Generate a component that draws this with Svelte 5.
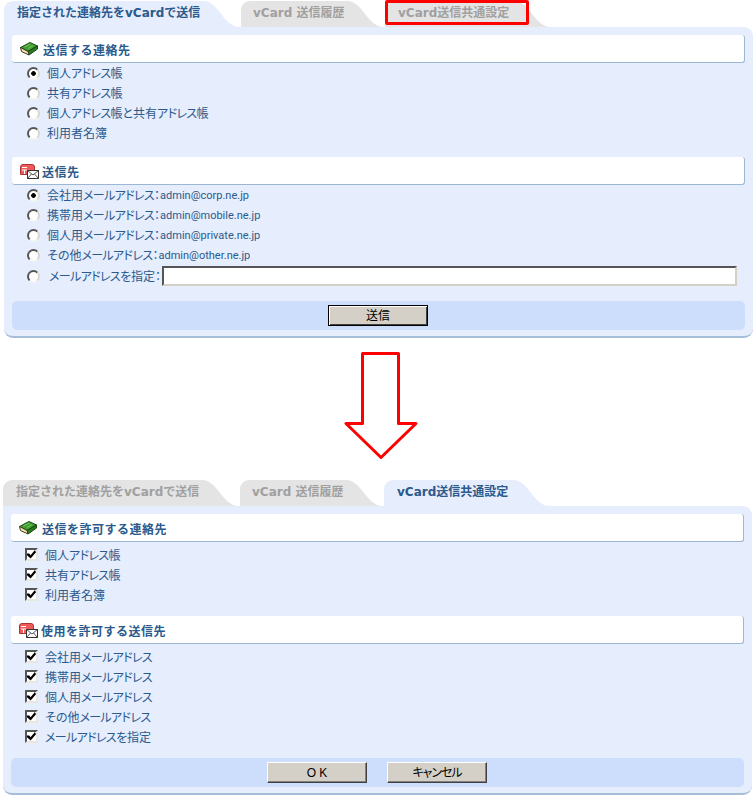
<script>
  const sendTabs = ['指定された連絡先をvCardで送信', 'vCard 送信履歴', 'vCard送信共通設定'];
  const contacts = ['個人アドレス帳', '共有アドレス帳', '個人アドレス帳と共有アドレス帳', '利用者名簿'];
  const targets = [
    ['会社用メールアドレス', 'admin@corp.ne.jp'],
    ['携帯用メールアドレス', 'admin@mobile.ne.jp'],
    ['個人用メールアドレス', 'admin@private.ne.jp'],
    ['その他メールアドレス', 'admin@other.ne.jp']
  ];
  const allowContacts = ['個人アドレス帳', '共有アドレス帳', '利用者名簿'];
  const allowTargets = ['会社用メールアドレス', '携帯用メールアドレス', '個人用メールアドレス', 'その他メールアドレス', 'メールアドレスを指定'];
  const parts = (s) => s.match(/[ァ-ヶー]+|[^ァ-ヶー]+/g);
  const isKana = (s) => /^[ァ-ヶー]/.test(s);
</script>

{#snippet book()}
  <svg class="icon" width="18" height="14" viewBox="0 0 18 14" aria-hidden="true">
    <polygon points="0.5,5.5 10,0.5 17.5,4 8,9.5" fill="#3f9d2e" stroke="#17490f"/>
    <polygon points="8,9.5 17.5,4 17.5,7 9,13" fill="#2c7a1f" stroke="#17490f"/>
    <polygon points="0.5,5.5 8,9.5 9,13 1.5,9.5" fill="#f2e8b4" stroke="#3d3a24"/>
    <path d="M4.5 5 L10.5 2 M8 6.5 L13 3.5" stroke="#7cc864" fill="none"/>
  </svg>
{/snippet}

{#snippet mail()}
  <svg class="icon mail" width="19" height="15" viewBox="0 0 19 15" aria-hidden="true">
    <path d="M0.5 10.5 V3 Q0.5 0.5 3 0.5 H12 Q14.5 0.5 14.5 3 V10.5 Z" fill="#f25a5a" stroke="#a83434"/>
    <path d="M2 3.5 H7 M2 6 H7 M4.5 6 V10" stroke="#fff" fill="none"/>
    <rect x="7.5" y="6.5" width="11" height="8" fill="#fff" stroke="#333"/>
    <path d="M7.5 6.5 L13 11 L18.5 6.5 M7.5 14.5 L11.5 10 M18.5 14.5 L14.5 10" stroke="#555" fill="none"/>
  </svg>
{/snippet}

{#snippet text(s)}
  <span class="label">{#each parts(s) as p}<span class:kana={isKana(p)}>{p}</span>{/each}</span>
{/snippet}

{#snippet tabs(active, outlined)}
  <div class="tabs">
    {#each sendTabs as label, i}
      <div class="tab t{i}" class:on={active === i}>
        <div class="tab-body">{label}</div>
        <svg class="curve" width="40" height="26" viewBox="0 0 40 26" aria-hidden="true">
          <path d="M0 0 H3 C19 0 23 26 40 26 H0 Z"/>
        </svg>
        {#if outlined === i}<div class="mark"></div>{/if}
      </div>
    {/each}
  </div>
{/snippet}

<main class="page">
  <section class="panel first">
    {@render tabs(0, 2)}
    <div class="body">
      <h2 class="head">{@render book()}<span>送信する連絡先</span></h2>
      <div class="group">
        {#each contacts as c, i}
          <label class="row"><input type="radio" name="who" checked={i === 0} />{@render text(c)}</label>
        {/each}
      </div>
      <h2 class="head">{@render mail()}<span>送信先</span></h2>
      <div class="group last">
        {#each targets as t, i}
          <label class="row"><input type="radio" name="to" checked={i === 0} />{@render text(t[0] + '：')}<span class="addr">{t[1]}</span></label>
        {/each}
        <label class="row tall"><input type="radio" name="to" /><span class="custom">{@render text('メールアドレスを指定：')}</span><input class="text" type="text" /></label>
      </div>
      <div class="foot"><button class="btn default">送信</button></div>
    </div>
  </section>

  <svg class="arrow" width="80" height="112" viewBox="0 0 80 112" aria-hidden="true">
    <path d="M18.5 1.5 H54.5 V71.5 H72 L37 105.5 L2 71.5 H18.5 Z" fill="#fff" stroke="#f00" stroke-width="3" stroke-linejoin="round"/>
  </svg>

  <section class="panel second">
    {@render tabs(2, -1)}
    <div class="body">
      <h2 class="head">{@render book()}<span>送信を許可する連絡先</span></h2>
      <div class="group">
        {#each allowContacts as c}
          <label class="row"><input type="checkbox" checked />{@render text(c)}</label>
        {/each}
      </div>
      <h2 class="head">{@render mail()}<span>使用を許可する送信先</span></h2>
      <div class="group last">
        {#each allowTargets as c}
          <label class="row"><input type="checkbox" checked />{@render text(c)}</label>
        {/each}
      </div>
      <div class="foot"><button class="btn">O K</button><button class="btn cancel">キャンセル</button></div>
    </div>
  </section>
</main>

<style>
  :global(body) { margin: 0; background: #fff; }
  .page {
    width: 756px;
    height: 800px;
    overflow: hidden;
    padding-top: 1px;
    box-sizing: border-box;
    font: 12px/16px "Liberation Sans", "Noto Sans CJK JP", sans-serif;
    font-feature-settings: "palt";
    color: #2b5a8c;
  }
  .panel { width: 749px; }
  .first { margin-left: 4px; }
  .second { margin-left: 3px; }
  .tabs { display: flex; gap: 1px; height: 26px; }
  .tab { display: flex; position: relative; color: #a0a0a0; font-weight: bold; fill: #e4e4e4; }
  .tab-body {
    background: #e4e4e4;
    border-top-left-radius: 9px;
    padding-left: 13px;
    line-height: 24px;
    white-space: nowrap;
    font-family: "DejaVu Sans", "Noto Sans CJK JP", sans-serif;
    font-feature-settings: normal;
  }
  .t0 .tab-body { width: 183px; }
  .t1 .tab-body { width: 91px; padding-left: 12px; }
  .t2 .tab-body { width: 113px; }
  .tab.on { color: #2b5a8c; fill: #e6edfd; }
  .tab.on .tab-body { background: #e6edfd; }
  .curve { display: block; }
  .mark {
    position: absolute;
    left: 0;
    top: -1px;
    width: 144px;
    height: 25px;
    box-sizing: border-box;
    border: 3px solid #f00;
    border-radius: 2px;
  }
  .body {
    background: #e6edfd;
    border-bottom: 2px solid #a6bdd8;
    border-radius: 0 9px 9px 9px;
    padding: 8px 8px 6px;
  }
  .head {
    display: flex;
    align-items: center;
    height: 27px;
    margin: 0;
    padding-left: 8px;
    background: #fff;
    border: solid #9db6d1;
    border-width: 0 1px 1px 0;
    border-radius: 3px;
    font-size: 12px;
    font-weight: bold;
    color: #2b5a8c;
    font-feature-settings: normal;
    letter-spacing: 0.5px;
  }
  .head span { margin-top: 4px; }
  .icon { margin-right: 5px; flex: none; }
  .icon.mail { margin: 2px 3px 0 0; }
  .group { padding-bottom: 14px; }
  .second .group { padding: 3px 0 11px; }
  .row { display: flex; align-items: center; height: 20px; padding-left: 15px; }
  .second .row { padding-left: 14px; }
  .row.tall { height: 22px; padding-right: 8px; }
  .label { margin-top: 1px; white-space: nowrap; }
  .second .label { margin-top: 2px; }
  .kana { letter-spacing: -0.65px; }
  .row input[type='radio'], .row input[type='checkbox'] {
    appearance: none;
    flex: none;
    position: relative;
    box-sizing: border-box;
    width: 13px;
    height: 13px;
    margin: 0 7px 0 0;
    background: #fff;
  }
  .row input[type='radio'] {
    border-radius: 50%;
    border: 2px solid;
    border-color: #555 #d8d8d0 #f4f4f0 #555;
  }
  .row input[type='radio']:checked {
    background: radial-gradient(circle, #000 0 2px, #fff 2.6px);
  }
  .row input[type='checkbox'] {
    margin-top: -2px;
    border: 2px solid;
    border-color: #555 #e8e8e0 #e8e8e0 #555;
  }
  .row input[type='checkbox']:checked::before {
    content: '';
    position: absolute;
    inset: 0;
    background: #000;
    clip-path: polygon(0 45%, 25% 45%, 40% 65%, 88% 5%, 100% 30%, 40% 100%, 0 65%);
  }
  .addr { font: 11px/16px Roboto, sans-serif; margin-top: 1px; }
  .custom { margin-left: 2px; display: flex; }
  .text {
    flex: 1;
    min-width: 0;
    height: 20px;
    box-sizing: border-box;
    margin: 0 0 0 1px;
    padding: 0;
    background: #fff;
    border: 2px solid;
    border-color: #555 #d4d0c8 #d4d0c8 #555;
    outline: none;
  }
  .foot {
    display: flex;
    justify-content: center;
    align-items: center;
    gap: 20px;
    height: 29px;
    padding-right: 1px;
    background: #cddefd;
    border-radius: 5px;
  }
  .btn {
    width: 100px;
    height: 21px;
    padding: 0;
    font: inherit;
    color: #000;
    background: #d4d0c8;
    border: 1px solid;
    border-color: #fff #404040 #404040 #fff;
    box-shadow: inset -1px -1px 0 #808080;
  }
  .btn.default {
    border: 1px solid #000;
    box-shadow: inset 1px 1px 0 #fff, inset -1px -1px 0 #404040;
  }
  .btn.cancel { letter-spacing: -1px; }
  .arrow { display: block; margin: 14px 0 16px 344px; }
</style>
